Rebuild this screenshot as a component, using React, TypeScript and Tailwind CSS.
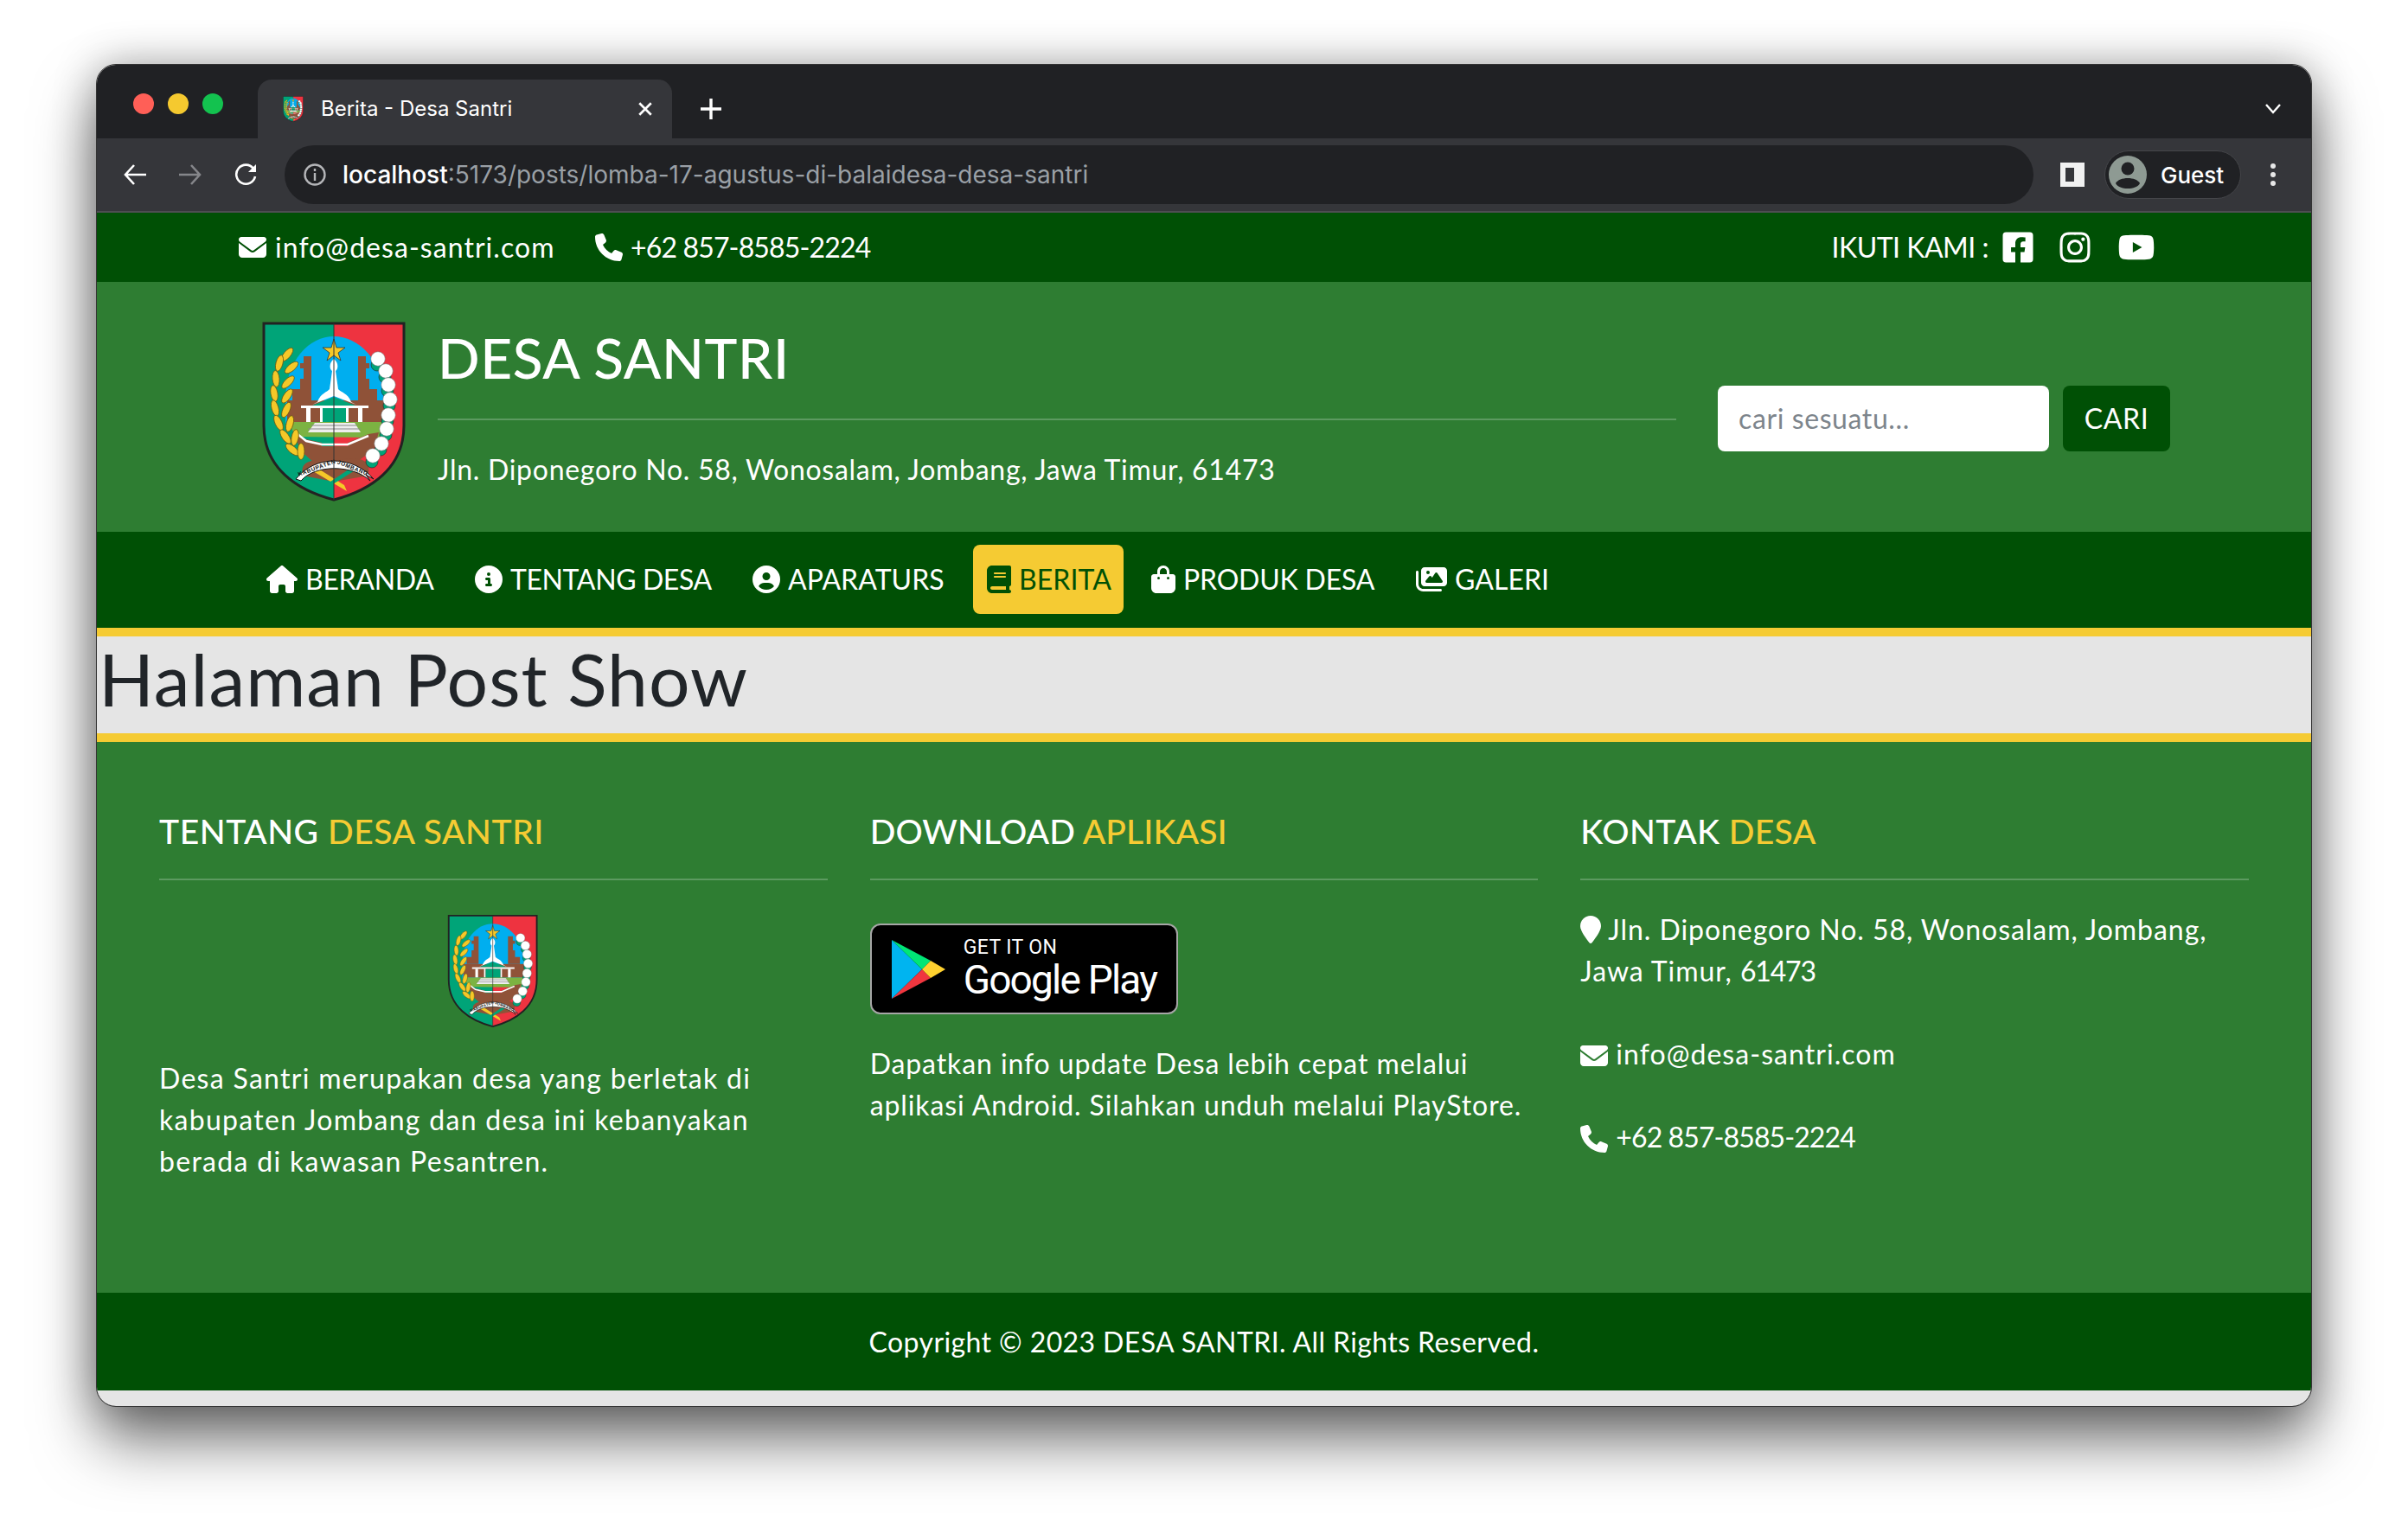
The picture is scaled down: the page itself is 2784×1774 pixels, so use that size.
import React from "react";
import { FaFacebookSquare } from "react-icons/fa";
import { FaEnvelope, FaPhone, FaInstagram, FaYoutube, FaHouse, FaCircleInfo, FaCircleUser, FaBook, FaBagShopping, FaImages, FaLocationPin } from "react-icons/fa6";

function Crest({ className }: { className?: string }) {
  const leaves = [
    [52, 60, 40], [43, 70, 15], [57, 75, 50], [39, 88, -5], [53, 92, 45], [37, 105, -10], [52, 108, 35],
    [38, 122, -15], [51, 124, 25], [42, 139, -25], [55, 140, 15], [50, 155, -35], [61, 156, 10], [58, 170, -50], [68, 172, 0],
  ];
  const cotton = [[157, 65], [166, 79], [169, 95], [171, 112], [169, 130], [167, 146], [161, 163], [151, 177]];
  return (
    <svg viewBox="23 21 167 210" className={className}>
      <path d="M25 24H106V228C64 217 25 192 25 142Z" fill="#00a478" />
      <path d="M106 24H187V142C187 192 148 217 106 228Z" fill="#ee3340" />
      <path d="M50 113C50 66 78 39 106 39C134 39 164 66 164 113V140H50Z" fill="#00aeef" />
      <path d="M58 113V100H67V88H71V76H67V70H71V62H80V113ZM156 113V100H147V88H143V76H147V70H143V62H134V113Z" fill="#8f5238" />
      <rect x="52" y="113" width="112" height="25" fill="#8f5238" />
      <path d="M106 65C100 70 101 77 104 79L101 100C98 104 91 104 87 115L81 118L106 108L132 118L126 115C122 104 114 104 111 100L108 79C111 77 112 70 106 65Z" fill="#fff" />
      <path d="M81 119L106 109L131 119Z" fill="#00a478" />
      <rect x="68" y="119" width="78" height="3" fill="#fff" />
      <path d="M74 122h5v16h-5zM90 122h3v16h-3zM120 122h3v16h-3zM134 122h5v16h-5z" fill="#fff" />
      <rect x="93" y="122" width="27" height="16" fill="#00a478" />
      <path d="M53 138H162L160 156H148L62 155Z" fill="#7cb342" />
      <path d="M76 150L84 139H130L137 150Z" fill="#eee" />
      <path d="M76 146H137M80 142H133" stroke="#888" strokeWidth="1" />
      <path d="M62 152L74 158L92 162V166H122V162L146 152L158 150L152 170L130 186H84L66 170Z" fill="#8f5238" />
      <path d="M64 152L74 160L92 164H122L146 154" stroke="#fff" strokeWidth="2.5" fill="none" />
      <path d="M106 182C130 180 150 176 146 200L106 207L70 200C66 180 84 182 106 182Z" fill="#8f5238" />
      <path d="M82 195L121 218L118 211L88 192Z" fill="#f5c828" />
      <path d="M132 193L92 218L96 211L126 191Z" fill="#00a478" />
      <path d="M62 204C84 176 128 176 152 204L143 199L148 206C128 187 84 187 68 206Z" fill="#fff" stroke="#111" strokeWidth="1" />
      <text x="87" y="193" textAnchor="middle" transform="rotate(-20 87 193)" fontSize="6.6" fontWeight="700" fill="#111" fontFamily="'Liberation Sans',sans-serif">KABUPATEN</text>
      <text x="127" y="193" textAnchor="middle" transform="rotate(22 127 193)" fontSize="6.6" fontWeight="700" fill="#111" fontFamily="'Liberation Sans',sans-serif">JOMBANG</text>
      {leaves.map(([x, y, r], i) => (
        <ellipse key={i} cx={x} cy={y} rx="4" ry="9.5" fill="#f5c828" stroke="#6d5b10" strokeWidth=".8" transform={`rotate(${r} ${x} ${y})`} />
      ))}
      {cotton.map(([x, y], i) => (
        <g key={i}>
          <circle cx={x - 1} cy={y + 7} r="7" fill="#00a478" stroke="#222" strokeWidth=".6" />
          <circle cx={x} cy={y} r="8.3" fill="#fff" stroke="#777" strokeWidth=".6" />
        </g>
      ))}
      <path d="M106 42L109 52H119L111 58L114 67L106 61L98 67L101 58L93 52H103Z" fill="#f5c828" stroke="#333" strokeWidth=".8" />
      <path d="M25 24H187V142C187 192 148 217 106 228C64 217 25 192 25 142Z" fill="none" stroke="#222" strokeWidth="3" />
      <path d="M106 24V228" stroke="#333" strokeWidth="1" />
    </svg>
  );
}

function PlayBadge() {
  return (
    <div className="w-[356px] h-[105px] rounded-[12px] bg-black border-2 border-[#a6a6a6] flex items-center">
      <svg viewBox="0 0 62 70" className="w-[62px] h-[70px] ml-[23px] mr-[21px] shrink-0">
        <path d="M0 1V69L35 35Z" fill="#00b4f0" />
        <path d="M0 1L45 25L35 35Z" fill="#00e676" />
        <path d="M0 69L45 45L35 35Z" fill="#f0363f" />
        <path d="M45 25L62 35L45 45L35 35Z" fill="#ffd12f" />
      </svg>
      <div className="flex flex-col text-white font-['Roboto',sans-serif]">
        <span className="text-[23px] leading-[24px] tracking-[0.4px]">GET IT ON</span>
        <span className="text-[46px] leading-[50px] font-normal tracking-[-1.8px] whitespace-nowrap">Google Play</span>
      </div>
    </div>
  );
}

function NavItem({ icon, label, w, active }: { icon: React.ReactNode; label: string; w: string; active?: boolean }) {
  return (
    <div className={`flex items-center h-[80px] px-[16px] gap-[9px] rounded-[8px] ${active ? "bg-[#f5cb33] text-[#005005]" : "text-white"}`}>
      {icon}
      <span className={`whitespace-nowrap ${w}`}>{label}</span>
    </div>
  );
}

function Heading({ a, b, t }: { a: string; b: string; t: string }) {
  return (
    <div className={`h-[80px] border-b-2 border-[#5c9a60] text-[39px] leading-[46px] font-medium whitespace-nowrap ${t}`}>
      {a} <span className="text-[#f5cb33]">{b}</span>
    </div>
  );
}

export default function App() {
  return (
    <div className="w-[2784px] h-[1774px] bg-white overflow-hidden pt-[75px] pl-[112px] font-['Lato',sans-serif] tracking-[0.6px]">
      <div className="w-[2560px] h-[1551px] rounded-[22px] overflow-hidden flex flex-col bg-[#e5e5e5] outline-1 outline-[#333] shadow-[0_40px_70px_rgba(0,0,0,0.55),0_0_50px_rgba(0,0,0,0.3)]">
        {/* tab strip */}
        <div className="h-[85px] shrink-0 bg-[#202124] flex items-end font-['Inter',sans-serif] tracking-normal text-white">
          <div className="w-[186px] h-[85px] flex items-start pt-[33px] pl-[42px] gap-[16px]">
            <span className="w-[24px] h-[24px] rounded-full bg-[#ff5f57]" />
            <span className="w-[24px] h-[24px] rounded-full bg-[#f5c92f]" />
            <span className="w-[24px] h-[24px] rounded-full bg-[#13c24f]" />
          </div>
          <div className="w-[479px] h-[68px] rounded-t-[16px] bg-[#35363a] flex items-center pl-[29px] pr-[22px]">
            <Crest className="w-[24px] h-[30px] shrink-0" />
            <span className="ml-[20px] text-[24px] whitespace-nowrap">Berita - Desa Santri</span>
            <svg viewBox="0 0 16 16" className="w-[18px] h-[18px] ml-auto" stroke="#fff" strokeWidth="2.4"><path d="M2 2L14 14M14 2L2 14" /></svg>
          </div>
          <div className="h-[68px] flex items-center pl-[33px]">
            <svg viewBox="0 0 24 24" className="w-[24px] h-[24px]" stroke="#fff" strokeWidth="3.4"><path d="M12 0V24M0 12H24" /></svg>
          </div>
          <div className="h-[68px] flex items-center ml-auto pr-[35px]">
            <svg viewBox="0 0 18 12" className="w-[18px] h-[12px]" fill="none" stroke="#fff" strokeWidth="2.4"><path d="M1 1L9 10L17 1" /></svg>
          </div>
        </div>
        {/* toolbar */}
        <div className="h-[86px] shrink-0 bg-[#35363a] border-b-2 border-[#4d4e52] flex items-center font-['Inter',sans-serif] tracking-normal text-white">
          <div className="flex items-center pl-[31px] gap-[38px] w-[217px]">
            <svg viewBox="0 0 26 24" className="w-[26px] h-[24px]" fill="none" stroke="#fff" strokeWidth="2.6"><path d="M26 12H2M12 1L2 12L12 23" /></svg>
            <svg viewBox="0 0 26 24" className="w-[26px] h-[24px]" fill="none" stroke="#85868a" strokeWidth="2.6"><path d="M0 12H24M14 1L24 12L14 23" /></svg>
            <svg viewBox="0 0 26 26" className="w-[26px] h-[26px]" fill="none" stroke="#fff" strokeWidth="2.6"><path d="M22 6A11 11 0 1 0 24 15" /><path d="M25 1V10H16Z" fill="#fff" stroke="none" /></svg>
          </div>
          <div className="w-[2022px] h-[68px] rounded-full bg-[#202124] flex items-center pl-[22px]">
            <svg viewBox="0 0 26 26" className="w-[26px] h-[26px]" fill="none" stroke="#b4b5b8" strokeWidth="2.4"><circle cx="13" cy="13" r="11.5" /><path d="M13 11V20M13 6V9" /></svg>
            <span className="ml-[19px] text-[28px] whitespace-nowrap font-medium">localhost<span className="text-[#9aa0a6] font-normal">:5173/posts/lomba-17-agustus-di-balaidesa-desa-santri</span></span>
          </div>
          <div className="w-[31px]" />
          <div className="w-[28px] h-[28px] border-[6px] border-r-[12px] border-[#f1f1f1]" />
          <div className="w-[23px]" />
          <div className="w-[158px] h-[56px] rounded-full bg-[#202124] border border-[#45464a] flex items-center pl-[4px]">
            <svg viewBox="0 0 44 44" className="w-[44px] h-[44px]"><circle cx="22" cy="22" r="22" fill="#8e9a93" /><circle cx="22" cy="15" r="7.5" fill="#202124" /><path d="M8 32C12 24 32 24 36 32C32 40 12 40 8 32Z" fill="#202124" /></svg>
            <span className="ml-[16px] text-[26px] font-medium">Guest</span>
          </div>
          <div className="flex-1 flex justify-center pr-[8px]">
            <svg viewBox="0 0 6 26" className="w-[6px] h-[26px]" fill="#e8e8e8"><circle cx="3" cy="3" r="3" /><circle cx="3" cy="13" r="3" /><circle cx="3" cy="23" r="3" /></svg>
          </div>
        </div>
        {/* top bar */}
        <div className="h-[80px] shrink-0 bg-[#005005] text-white text-[32px] flex items-center pl-[164px] pr-[180px]">
          <FaEnvelope className="w-[32px] h-[32px]" />
          <span className="ml-[10px] w-[322px] whitespace-nowrap tracking-[1.05px]">info@desa-santri.com</span>
          <FaPhone className="ml-[48px] w-[32px] h-[32px]" />
          <span className="ml-[9px] whitespace-nowrap tracking-[-0.85px]">+62 857-8585-2224</span>
          <span className="ml-auto whitespace-nowrap tracking-[-0.5px]">IKUTI KAMI :</span>
          <FaFacebookSquare className="ml-[14px] w-[40px] h-[40px]" />
          <FaInstagram className="ml-[28px] w-[36px] h-[40px]" />
          <FaYoutube className="ml-[31px] w-[44px] h-[38px]" />
        </div>
        {/* header */}
        <div className="h-[289px] shrink-0 bg-[#2e7d32] text-white flex pl-[191px]">
          <Crest className="w-[167px] h-[210px] mt-[45px] shrink-0" />
          <div className="ml-[36px] w-[1432px] shrink-0 flex flex-col">
            <div className="h-[160px] border-b-2 border-[#5c9a60] pt-[48px] text-[64px] leading-[80px] font-medium whitespace-nowrap">DESA SANTRI</div>
            <div className="mt-[33px] text-[32px] leading-[48px] whitespace-nowrap tracking-[0.72px]">Jln. Diponegoro No. 58, Wonosalam, Jombang, Jawa Timur, 61473</div>
          </div>
          <div className="ml-[48px] mt-[120px] flex gap-[16px] h-[76px]">
            <div className="w-[383px] rounded-[8px] bg-white flex items-center pl-[24px] text-[#7d858c] text-[32px]">cari sesuatu...</div>
            <div className="w-[124px] rounded-[8px] bg-[#005005] flex items-center justify-center text-[32px]">CARI</div>
          </div>
        </div>
        {/* nav */}
        <div className="h-[111px] shrink-0 bg-[#005005] flex items-center pl-[180px] gap-[16px] text-[32px] pb-[1px]">
          <NavItem icon={<FaHouse className="w-[36px] h-[32px]" />} label="BERANDA" w="w-[148px] tracking-[-0.3px]" />
          <NavItem icon={<FaCircleInfo className="w-[32px] h-[32px]" />} label="TENTANG DESA" w="w-[232px] tracking-[-0.4px]" />
          <NavItem icon={<FaCircleUser className="w-[32px] h-[32px]" />} label="APARATURS" w="w-[182px] tracking-[0.05px]" />
          <NavItem active icon={<FaBook className="w-[28px] h-[32px]" />} label="BERITA" w="w-[105px] tracking-[0.1px]" />
          <NavItem icon={<FaBagShopping className="w-[28px] h-[32px]" />} label="PRODUK DESA" w="w-[221px] tracking-[-0.2px]" />
          <NavItem icon={<FaImages className="w-[36px] h-[32px]" />} label="GALERI" w="w-[108px] tracking-[0.05px]" />
        </div>
        {/* page title */}
        <div className="h-[132px] shrink-0 bg-[#e5e5e5] border-y-[10px] border-[#f5cb33] flex items-center text-[#212529] text-[84px] leading-[96px] pl-[2px] pb-[15px] whitespace-nowrap tracking-[1px]">Halaman Post Show</div>
        {/* footer */}
        <div className="h-[637px] shrink-0 bg-[#2e7d32] text-white text-[32px] leading-[48px] px-[72px] pt-[80px] grid grid-cols-3 gap-[49px]">
          <div>
            <Heading a="TENTANG" b="DESA SANTRI" t="tracking-[0.55px]" />
            <div className="flex justify-center mt-[39px]"><Crest className="w-[108px] h-[132px]" /></div>
            <p className="mt-[34px] tracking-[1.3px]">Desa Santri merupakan desa yang berletak di kabupaten Jombang dan desa ini kebanyakan berada di kawasan Pesantren.</p>
          </div>
          <div>
            <Heading a="DOWNLOAD" b="APLIKASI" t="tracking-[0.1px]" />
            <div className="mt-[50px]"><PlayBadge /></div>
            <p className="mt-[33px] tracking-[0.9px]">Dapatkan info update Desa lebih cepat melalui aplikasi Android. Silahkan unduh melalui PlayStore.</p>
          </div>
          <div>
            <Heading a="KONTAK" b="DESA" t="tracking-[0.4px]" />
            <p className="mt-[33px] tracking-[0.95px]"><FaLocationPin className="inline w-[24px] h-[32px] mr-[8px] align-[-4px]" />Jln. Diponegoro No. 58, Wonosalam, Jombang, Jawa Timur, <span className="tracking-[-1.2px]">61473</span></p>
            <p className="mt-[48px] tracking-[1.05px]"><FaEnvelope className="inline w-[32px] h-[32px] mr-[9px] align-[-6px]" />info@desa-santri.com</p>
            <p className="mt-[48px] tracking-[-0.9px]"><FaPhone className="inline w-[32px] h-[32px] mr-[9px] align-[-6px]" />+62 857-8585-2224</p>
          </div>
        </div>
        {/* copyright */}
        <div className="h-[113px] shrink-0 bg-[#005005] text-white text-[32px] flex items-center justify-center tracking-[0.4px]">Copyright © 2023 DESA SANTRI. All Rights Reserved.</div>
      </div>
    </div>
  );
}
